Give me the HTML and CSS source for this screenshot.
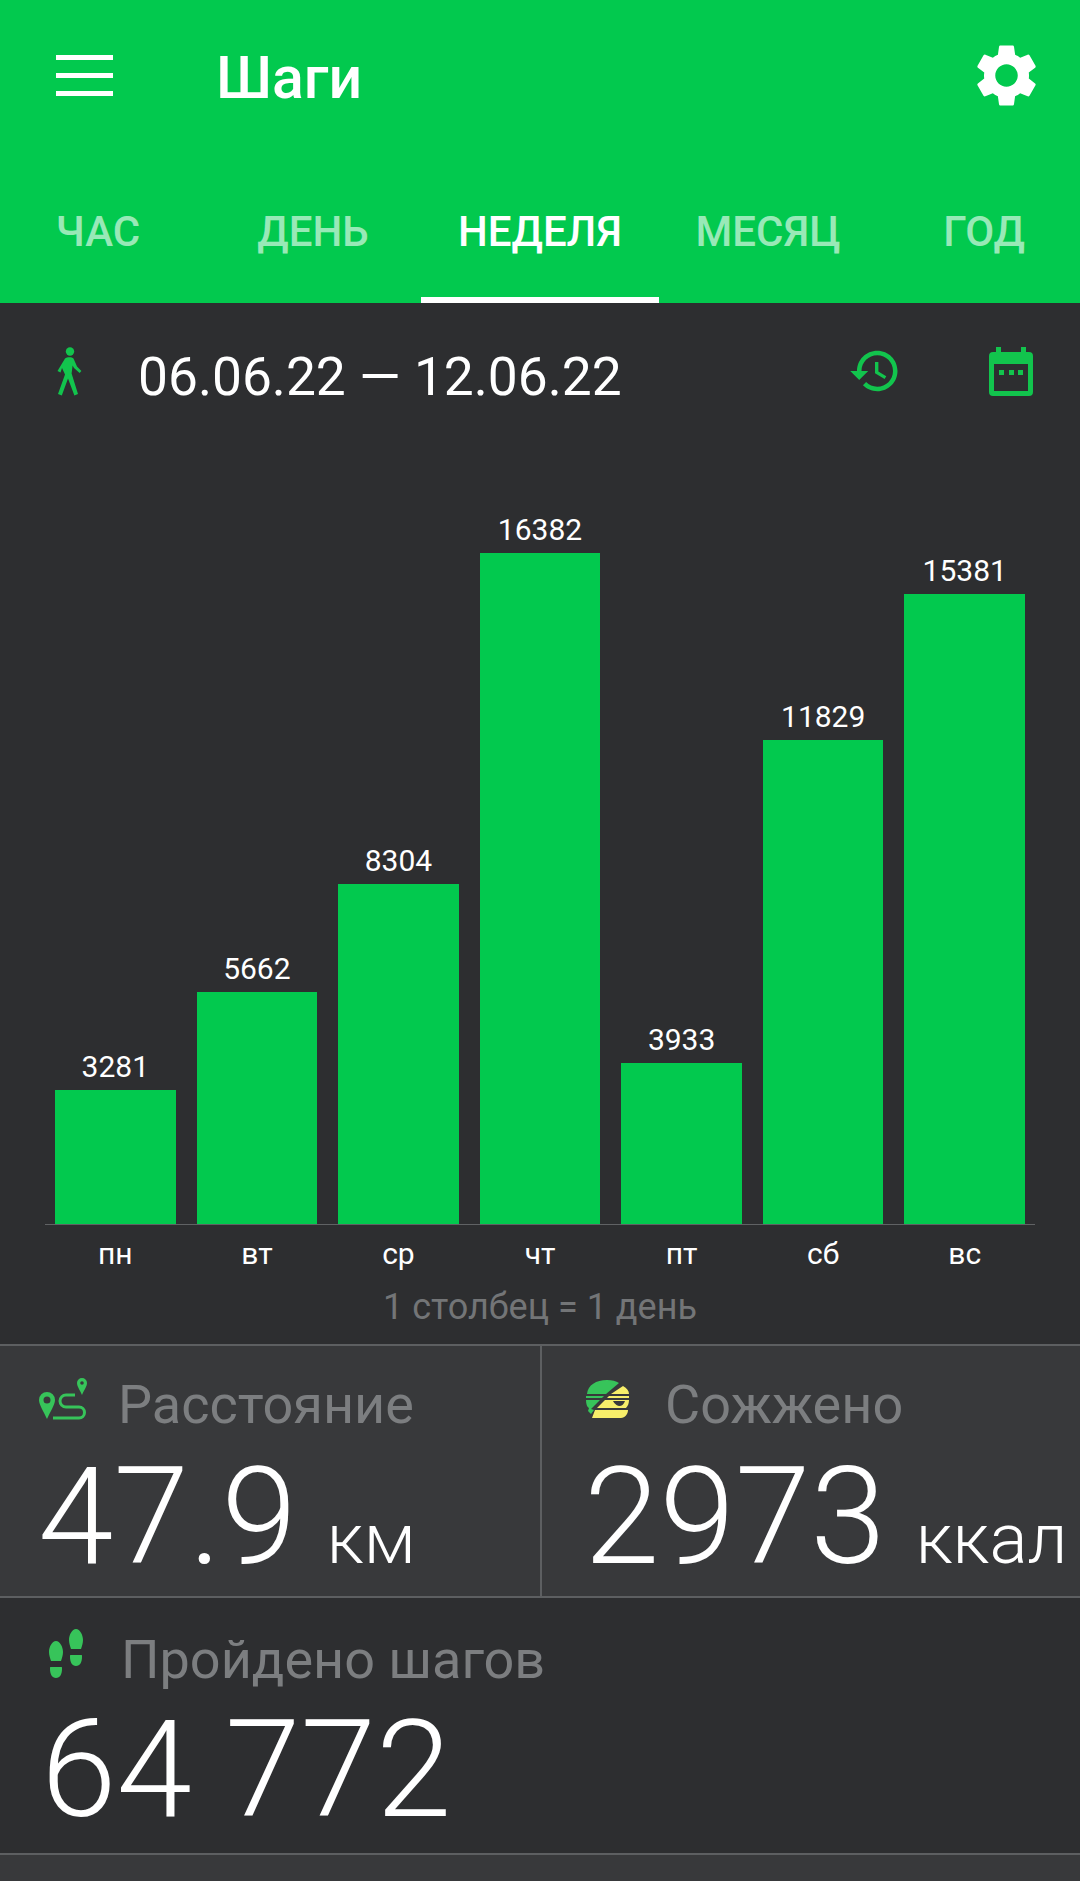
FILE: index.html
```html
<!DOCTYPE html>
<html lang="ru">
<head>
  <meta charset="UTF-8">
  <meta name="viewport" content="width=device-width, initial-scale=1.0">
  <title>Шаги</title>
  <link rel="stylesheet" href="styles.css">
</head>
<body>
  <header class="appbar">
    <div class="toolbar">
      <div class="burger"><span></span><span></span><span></span></div>
      <h1 class="title">Шаги</h1>
      <svg class="gear" viewBox="0 0 24 24"><path d="M19.14 12.94c.04-.3.06-.61.06-.94 0-.32-.02-.64-.07-.94l2.03-1.58c.18-.14.23-.41.12-.61l-1.92-3.32c-.12-.22-.37-.29-.59-.22l-2.39.96c-.5-.38-1.03-.7-1.62-.94l-.36-2.54c-.04-.24-.24-.41-.48-.41h-3.84c-.24 0-.43.17-.47.41l-.36 2.54c-.59.24-1.13.57-1.62.94l-2.39-.96c-.22-.08-.47 0-.59.22L2.74 8.87c-.12.21-.08.47.12.61l2.03 1.58c-.05.3-.09.63-.09.94s.02.64.07.94l-2.03 1.58c-.18.14-.23.41-.12.61l1.92 3.32c.12.22.37.29.59.22l2.39-.96c.5.38 1.03.7 1.62.94l.36 2.54c.05.24.24.41.48.41h3.84c.24 0 .44-.17.47-.41l.36-2.54c.59-.24 1.13-.56 1.62-.94l2.39.96c.22.08.47 0 .59-.22l1.92-3.32c.12-.22.07-.47-.12-.61l-2.01-1.58zM12 15.6c-1.98 0-3.6-1.62-3.6-3.6s1.62-3.6 3.6-3.6 3.6 1.62 3.6 3.6-1.62 3.6-3.6 3.6z"/></svg>
    </div>
    <nav class="tabs">
      <div class="tab">ЧАС</div>
      <div class="tab tab-day">ДЕНЬ</div>
      <div class="tab active">НЕДЕЛЯ</div>
      <div class="tab">МЕСЯЦ</div>
      <div class="tab tab-year">ГОД</div>
    </nav>
  </header>

  <main>
    <section class="range">
      <svg class="walk" viewBox="0 0 25 49">
        <circle cx="13" cy="4.500" r="4.200"/>
        <path d="M8 11.500c2-1.700 7-1.700 8.500 0l3.500 8 4.400 4.400-1.800 2-5.600-4.800-1.400-2.600-1 8 6.400 20.500-3.600 1.400-6.400-17-6.200 17L1 47l7-19.500-3-6.500-1.500 4.500-3-1.500z"/>
      </svg>
      <div class="dates">06.06.22 — 12.06.22</div>
      <svg class="history" viewBox="0 0 24 24"><path d="M13 3c-4.97 0-9 4.03-9 9H1l3.89 3.89.07.14L9 12H6c0-3.87 3.13-7 7-7s7 3.13 7 7-3.13 7-7 7c-1.93 0-3.68-.79-4.94-2.06l-1.42 1.42C8.27 19.99 10.51 21 13 21c4.97 0 9-4.03 9-9s-4.03-9-9-9zm-1 5v5l4.28 2.54.72-1.21-3.5-2.08V8H12z"/></svg>
      <svg class="calendar" viewBox="0 0 44 49">
        <path fill-rule="evenodd" d="M7 0h5v5h20V0h5v5h3a4 4 0 0 1 4 4v36a4 4 0 0 1-4 4H4a4 4 0 0 1-4-4V9a4 4 0 0 1 4-4h3zM5 17v27h34V17z"/>
        <rect x="10" y="23" width="5" height="5"/>
        <rect x="20" y="23" width="5" height="5"/>
        <rect x="29" y="23" width="5" height="5"/>
      </svg>
    </section>

    <section class="chart">
      <div class="bars">
        <div class="col"><span class="num">3281</span><div class="bar" style="height:134px"></div></div>
        <div class="col"><span class="num">5662</span><div class="bar" style="height:232px"></div></div>
        <div class="col"><span class="num">8304</span><div class="bar" style="height:340px"></div></div>
        <div class="col"><span class="num">16382</span><div class="bar" style="height:671px"></div></div>
        <div class="col"><span class="num">3933</span><div class="bar" style="height:161px"></div></div>
        <div class="col"><span class="num">11829</span><div class="bar" style="height:484px"></div></div>
        <div class="col"><span class="num">15381</span><div class="bar" style="height:630px"></div></div>
      </div>
      <div class="days">
        <span>пн</span><span>вт</span><span>ср</span><span>чт</span><span>пт</span><span>сб</span><span>вс</span>
      </div>
      <p class="caption">1 столбец = 1 день</p>
    </section>

    <section class="stats">
      <div class="stat stat-left">
        <div class="stat-head">
          <svg class="ico-route" viewBox="0 0 50 42">
            <path fill-rule="evenodd" d="M9 14a8 8 0 0 1 8 8c0 5-5 12-8 19-3-7-8-14-8-19a8 8 0 0 1 8-8zm0 4.500a3.500 3.500 0 1 0 0 7 3.500 3.500 0 0 0 0-7z"/>
            <path fill-rule="evenodd" d="M44 0a5 5 0 0 1 5 5c0 3.500-3 7-5 12-2-5-5-8.500-5-12a5 5 0 0 1 5-5zm0 3.200a1.800 1.800 0 1 0 0 3.600 1.800 1.800 0 0 0 0-3.600z"/>
            <path class="route-line" d="M37 17H28a6 6 0 0 0 0 12H41a5.500 5.500 0 0 1 0 11H15"/>
          </svg>
          <span class="stat-label">Расстояние</span>
        </div>
        <div class="stat-value">47.9<span class="unit">км</span></div>
      </div>
      <div class="stat stat-right">
        <div class="stat-head">
          <svg class="ico-burger" viewBox="0 0 44 38">
            <path fill="#37c45a" d="M1 14C2 5 10 0 21 0c5 0 9 1 12 3L20 14zM0 16h18l-2 2H0zM14 20L5 29l3 1-3 4-3-3 1-3C1 27 0 24 0 20z"/>
            <path fill="#f7ee6a" d="M37 6c4 2 6 5 6 8H25zM23 16h20v2H21zM19 20h24c0 3-1 6-3 8H11zM9 30h33c0 4-3 8-7 8H6z"/>
            <path fill="#38393b" d="M27 21h12c-1 3-3 5-6 5-2 0-5-3-6-5z"/>
          </svg>
          <span class="stat-label">Сожжено</span>
        </div>
        <div class="stat-value">2973<span class="unit">ккал</span></div>
      </div>
    </section>

    <section class="total">
      <div class="stat-head">
        <svg class="ico-feet" viewBox="0 0 34 49">
          <path d="M7 12c4 0 7 6 7 11 0 3-1 6-2 9H2c-1-3-2-6-2-9 0-5 3-11 7-11zM2 38h10c1 0 1 0 1 2 0 5-2 9-6 9s-6-4-6-9c0-2 0-2 1-2z"/>
          <path d="M27 0c4 0 7 6 7 11 0 3-1 6-2 9H22c-1-3-2-6-2-9 0-5 3-11 7-11zM22 26h10c1 0 1 0 1 2 0 5-2 9-6 9s-6-4-6-9c0-2 0-2 1-2z"/>
        </svg>
        <span class="stat-label">Пройдено шагов</span>
      </div>
      <div class="stat-value">64 772</div>
    </section>

    <div class="bottom"></div>
  </main>
</body>
</html>
```

FILE: styles.css
```css
* {
  box-sizing: border-box;
}

body {
  margin: 0;
  width: 1080px;
  height: 1881px;
  overflow: hidden;
  background: #2d2e30;
  color: #fff;
  font-family: Roboto, "Noto Sans", sans-serif;
}

.appbar {
  background: #02c94e;
  height: 303px;
  display: flex;
  flex-direction: column;
  justify-content: space-between;
}

.toolbar {
  display: flex;
  align-items: center;
  height: 150px;
  padding-left: 56px;
  padding-right: 36px;
}

.burger {
  width: 57px;
  display: flex;
  flex-direction: column;
  gap: 13px;
}

.burger span {
  display: block;
  height: 5px;
  background: #fff;
}

.title {
  margin: 4px 0 0 103px;
  font-size: 59px;
  font-weight: 500;
  flex: 1;
}

.gear {
  width: 75px;
  height: 75px;
  fill: #fff;
}

.tabs {
  display: grid;
  grid-template-columns: 196px 225px 238px 218px 203px;
  height: 123px;
}

.tab {
  font-size: 42px;
  font-weight: 500;
  text-align: center;
  line-height: 80px;
  padding-top: 12px;
  color: rgba(255, 255, 255, 0.6);
}

.tab.active {
  color: #fff;
  border-bottom: 6px solid #fff;
}

.tab-day {
  padding-left: 9px;
}

.tab-year {
  padding-left: 11px;
}

.range {
  display: flex;
  align-items: center;
  height: 120px;
  padding: 16px 47px 0 57px;
}

.walk {
  width: 25px;
  height: 49px;
  fill: #12c44d;
}

.dates {
  flex: 1;
  margin: 12px 0 0 56px;
  font-size: 53.300px;
}

.history {
  width: 54px;
  height: 54px;
  fill: #12c44d;
  margin-right: 87px;
}

.calendar {
  width: 44px;
  height: 49px;
  fill: #12c44d;
}

.chart {
  padding: 0 45px;
}

.bars {
  display: flex;
  align-items: flex-end;
  height: 802px;
  padding: 0 10px;
  gap: 21px;
  border-bottom: 1px solid #606264;
}

.col {
  width: 121px;
  display: flex;
  flex-direction: column;
  align-items: center;
}

.num {
  font-size: 30px;
  line-height: 42px;
  margin-bottom: 2px;
}

.bar {
  width: 100%;
  background: #02c94e;
}

.days {
  display: flex;
  gap: 21px;
  padding: 0 10px;
  margin-top: 9px;
  font-size: 30px;
  line-height: 40px;
}

.days span {
  width: 121px;
  text-align: center;
}

.caption {
  margin: 13px 0 0;
  text-align: center;
  font-size: 36px;
  line-height: 40px;
  color: #737577;
}

.stats {
  display: flex;
  margin-top: 17px;
  height: 254px;
  background: #38393b;
  border-top: 2px solid #5d5f61;
  border-bottom: 2px solid #5d5f61;
}

.stat {
  flex: 1;
  min-width: 0;
  padding-top: 29px;
}

.stat-left {
  flex: 0 0 542px;
  padding-left: 38px;
  border-right: 2px solid #5d5f61;
}

.stat-right {
  padding-left: 42px;
}

.stat-head {
  display: flex;
  align-items: center;
  height: 60px;
}

.stat-label {
  font-size: 54px;
  line-height: 60px;
  color: #7c7e80;
}

.stat-value {
  font-size: 136px;
  font-weight: 300;
  line-height: 130px;
  white-space: nowrap;
  margin-top: 17px;
}

.unit {
  font-size: 71px;
  margin-left: 30px;
}

.ico-route {
  width: 50px;
  height: 42px;
  fill: #37c45a;
  margin: 0 30px 12px 0;
}

.route-line {
  fill: none;
  stroke: #37c45a;
  stroke-width: 3;
}

.ico-burger {
  width: 44px;
  height: 38px;
  margin: 0 35px 12px 2px;
}

.ico-feet {
  width: 34px;
  height: 49px;
  fill: #37c45a;
  margin-right: 38px;
  margin-bottom: 14px;
}

.total {
  height: 257px;
  padding: 32px 0 0 49px;
  border-bottom: 2px solid #5d5f61;
}

.total .stat-value {
  margin-left: -8px;
  margin-top: 15px;
}

.bottom {
  height: 27px;
  background: #38393b;
}
```
